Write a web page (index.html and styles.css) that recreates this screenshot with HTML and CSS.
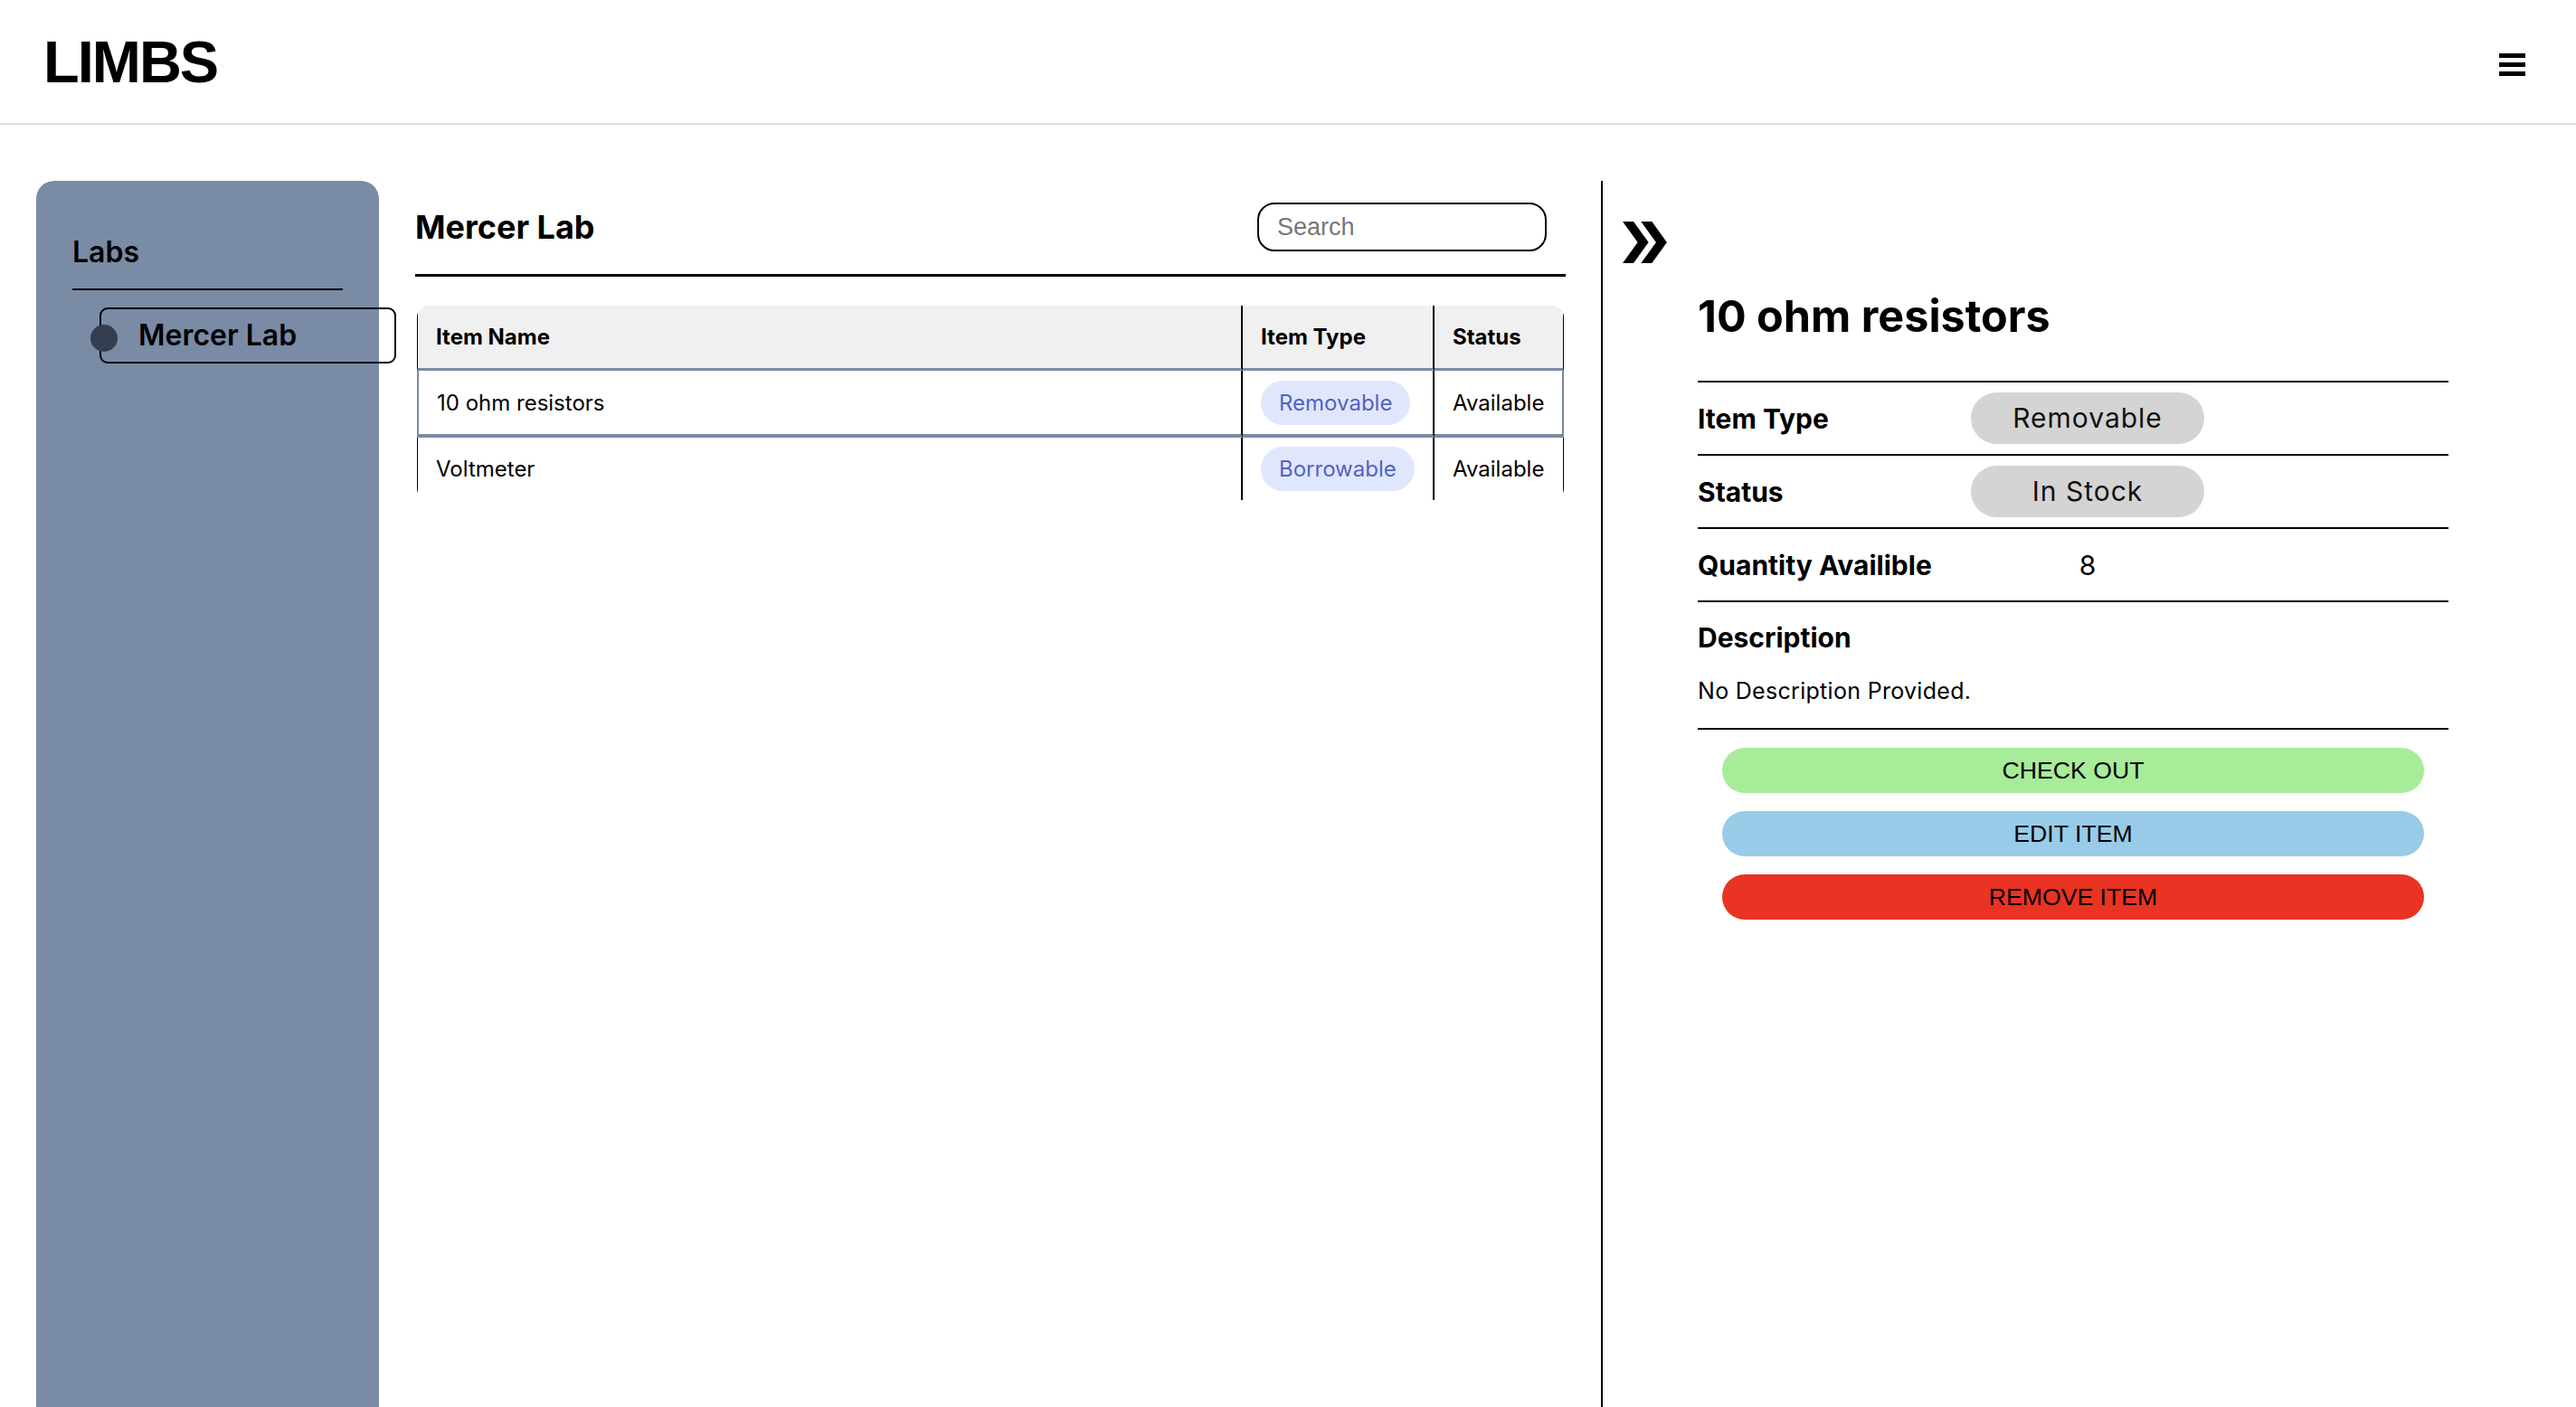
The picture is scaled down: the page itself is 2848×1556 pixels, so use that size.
FILE: index.html
```html
<!DOCTYPE html>
<html lang="en">
<head>
<meta charset="utf-8">
<title>LIMBS</title>
<link rel="stylesheet" href="styles.css">
</head>
<body>
<header class="topbar">
  <div class="brand">LIMBS</div>
  <button class="menu-btn" aria-label="Menu"><span></span><span></span><span></span></button>
</header>
<div class="layout">
  <aside class="sidebar">
    <h2 class="side-title">Labs</h2>
    <ul class="lab-list">
      <li class="lab-item"><span class="lab-dot"></span>Mercer Lab</li>
    </ul>
  </aside>
  <main class="main">
    <div class="main-head">
      <h1 class="main-title">Mercer Lab</h1>
      <input class="search" type="text" placeholder="Search">
    </div>
    <div class="table-wrap">
      <table class="items">
        <colgroup><col class="c-name"><col class="c-type"><col class="c-status"></colgroup>
        <thead>
          <tr><th>Item Name</th><th>Item Type</th><th>Status</th></tr>
        </thead>
        <tbody>
          <tr class="selected"><td>10 ohm resistors</td><td><span class="type-pill">Removable</span></td><td>Available</td></tr>
          <tr><td>Voltmeter</td><td><span class="type-pill">Borrowable</span></td><td>Available</td></tr>
        </tbody>
      </table>
    </div>
  </main>
  <section class="detail">
    <button class="collapse-btn" aria-label="Collapse">
      <svg width="49" height="46" viewBox="0 0 49 46"><path d="M0 0H12L28.6 23L12 46H0L16.6 23Z M20.3 0H32.3L48.9 23L32.3 46H20.3L36.9 23Z" fill="#000"/></svg>
    </button>
    <div class="detail-body">
      <h2 class="detail-title">10 ohm resistors</h2>
      <div class="drows">
        <div class="drow"><div class="dlabel">Item Type</div><div class="dval"><span class="gpill">Removable</span></div></div>
        <div class="drow"><div class="dlabel">Status</div><div class="dval"><span class="gpill">In Stock</span></div></div>
        <div class="drow"><div class="dlabel">Quantity Availible</div><div class="dval">8</div></div>
        <div class="ddesc">
          <div class="dlabel">Description</div>
          <p class="desc-text">No Description Provided.</p>
        </div>
      </div>
      <div class="actions">
        <button class="act act-green">CHECK OUT</button>
        <button class="act act-blue">EDIT ITEM</button>
        <button class="act act-red">REMOVE ITEM</button>
      </div>
    </div>
  </section>
</div>
</body>
</html>
```
FILE: styles.css
```css
* { box-sizing: border-box; }
html, body { margin: 0; padding: 0; height: 100%; }
body {
  font-family: Inter, "Noto Sans", sans-serif;
  color: #000;
  background: #fff;
  overflow: hidden;
}

.topbar {
  height: 138px;
  border-bottom: 2px solid #e1e1e1;
  display: flex;
  align-items: center;
  justify-content: space-between;
  padding: 0 56px 0 48px;
}
.brand {
  font-family: "Liberation Sans", Arial, sans-serif;
  font-weight: 700;
  font-size: 65px;
  letter-spacing: -2px;
  line-height: 1;
}
.menu-btn {
  background: none;
  border: 0;
  padding: 0;
  margin-top: 7px;
  width: 29px;
  display: flex;
  flex-direction: column;
  gap: 5px;
  cursor: pointer;
}
.menu-btn span {
  display: block;
  width: 29px;
  height: 5px;
  background: #000;
}

.layout {
  display: flex;
  align-items: flex-start;
  padding: 62px 0 0 40px;
  height: calc(100vh - 138px);
}

.sidebar {
  width: 379px;
  flex: none;
  align-self: stretch;
  background: #7a8ba5;
  border-radius: 20px 20px 0 0;
  padding: 59px 40px 0 40px;
}
.side-title {
  margin: 0;
  font-size: 32px;
  line-height: 40px;
  font-weight: 600;
  padding-bottom: 20px;
  border-bottom: 2px solid #000;
}
.lab-list {
  list-style: none;
  margin: 19px 0 0 30px;
  padding: 0;
}
.lab-item {
  position: relative;
  width: 328px;
  height: 62px;
  border: 2px solid #000;
  border-radius: 9px;
  padding-left: 41px;
  font-size: 32px;
  line-height: 58px;
  font-weight: 600;
}
.lab-dot {
  position: absolute;
  left: -12px;
  top: 17px;
  width: 30px;
  height: 30px;
  border-radius: 50%;
  background: #343e50;
}

.main {
  width: 1272px;
  flex: none;
  margin-left: 40px;
}
.main-head {
  display: flex;
  align-items: center;
  justify-content: space-between;
  padding: 24px 21px 25px 0;
  border-bottom: 3px solid #000;
}
.main-title {
  margin: 0;
  font-size: 36px;
  line-height: 54px;
  font-weight: 700;
}
.search {
  width: 320px;
  height: 54px;
  border: 2px solid #000;
  border-radius: 19px;
  padding: 0 20px;
  font-family: "Liberation Sans", Arial, sans-serif;
  font-size: 27px;
  color: #000;
  outline: none;
}
.search::placeholder { color: #777; }

.table-wrap {
  margin: 32px 2px 0 2px;
  border-radius: 13px;
  overflow: hidden;
}
.items {
  width: 100%;
  border-collapse: separate;
  border-spacing: 0;
  table-layout: fixed;
  font-size: 24px;
}
.c-name { width: 913px; }
.c-type { width: 212px; }
.items th, .items td {
  padding: 0 20px;
  text-align: left;
  vertical-align: middle;
  white-space: nowrap;
}
.items th {
  height: 72px;
  background: #f0f0f0;
  font-weight: 700;
  border-bottom: 3px solid #7a8ba5;
}
.items td { height: 69px; }
.items th:first-child, .items td:first-child { border-left: 1px solid #000; }
.items th:nth-child(1), .items th:nth-child(2),
.items td:nth-child(1), .items td:nth-child(2) { border-right: 2px solid #000; }
.items th:last-child, .items td:last-child { border-right: 1px solid #000; }
.items tr.selected td { height: 74px; border-bottom: 4px solid #7a8ba5; }
.items tr.selected td:first-child { border-left: 2px solid #7a8ba5; }
.items tr.selected td:last-child { border-right: 2px solid #7a8ba5; }

.type-pill {
  display: inline-block;
  height: 49px;
  line-height: 49px;
  padding: 0 20px;
  border-radius: 25px;
  background: #e0e7fc;
  color: #5363c3;
}

.detail {
  flex: 1;
  align-self: stretch;
  margin-left: 39px;
  border-left: 2px solid #000;
  padding: 45px 0 0 22px;
}
.collapse-btn {
  display: block;
  background: none;
  border: 0;
  padding: 0;
  width: 49px;
  height: 46px;
  cursor: pointer;
}
.collapse-btn svg { display: block; }
.detail-body {
  width: 830px;
  margin-left: 83px;
}
.detail-title {
  margin: 29px 0 0;
  font-size: 48.5px;
  line-height: 60px;
  font-weight: 700;
}
.drows { margin-top: 41px; }
.drow {
  display: flex;
  align-items: center;
  height: 81px;
  border-top: 2px solid #000;
}
.dlabel {
  width: 302px;
  font-size: 30px;
  font-weight: 700;
  line-height: 40px;
}
.dval {
  width: 258px;
  text-align: center;
  font-size: 30px;
}
.gpill {
  display: block;
  height: 57px;
  line-height: 57px;
  border-radius: 29px;
  background: #d4d4d4;
  color: #111;
  letter-spacing: 1px;
}
.ddesc {
  border-top: 2px solid #000;
  border-bottom: 2px solid #000;
  padding: 19px 0 26px;
}
.desc-text {
  margin: 24px 0 0;
  font-size: 25px;
  letter-spacing: 0.3px;
  line-height: 30px;
}

.actions {
  margin-top: 20px;
  padding: 0 27px;
  display: flex;
  flex-direction: column;
  gap: 20px;
}
.act {
  height: 50px;
  border: 0;
  border-radius: 25px;
  font-family: "Liberation Sans", Arial, sans-serif;
  font-size: 26.67px;
  color: #000;
  cursor: pointer;
}
.act-green { background: #a7ec99; }
.act-blue { background: #97cbe8; }
.act-red { background: #e93323; }
```
